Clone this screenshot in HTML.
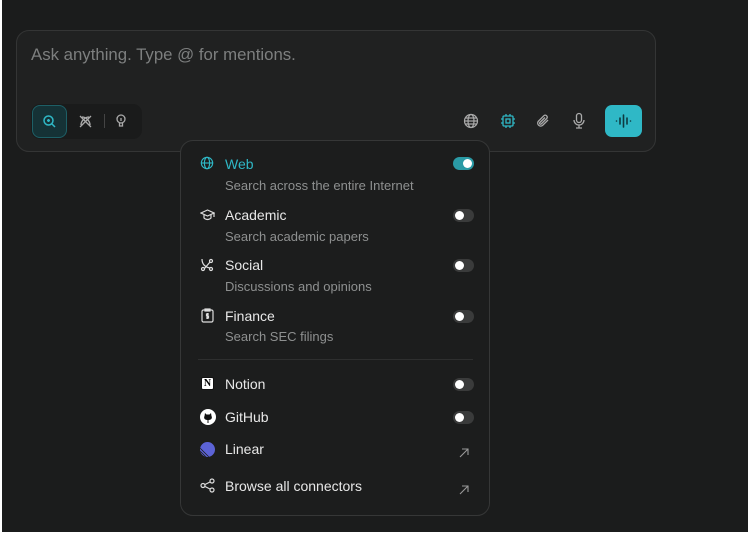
<!DOCTYPE html>
<html><head><meta charset="utf-8"><style>
*{box-sizing:border-box;margin:0;padding:0}
html,body{width:751px;height:534px;background:#fff;overflow:hidden;font-family:"Liberation Sans",sans-serif}
.bg{position:absolute;left:2px;top:0;width:746px;height:532px;background:#1b1c1c}
.box{position:absolute;left:16px;top:30px;width:640px;height:122px;background:#202121;border:1px solid #343535;border-radius:13px}
.ph{position:absolute;left:14px;top:14px;font-size:16.8px;color:#7d7f7f}
.seg{position:absolute;left:14px;top:73px;width:111px;height:35px;background:#1a1b1b;border-radius:9px}
.seg .act{position:absolute;left:1px;top:1px;width:35px;height:33px;background:#153236;border:1px solid #1d5f66;border-radius:8px}
.seg .div{position:absolute;left:73px;top:10px;width:1px;height:14px;background:#444}
svg{position:absolute}
.send{position:absolute;left:588px;top:74px;width:37px;height:32px;background:#2fb8c6;border-radius:7px}
.pop{position:absolute;left:180px;top:140px;width:310px;height:376px;background:#1c1d1d;border:1px solid #363737;border-radius:13px}
.t{position:absolute;left:44px;font-size:14px;color:#e8e8e8}
.s{position:absolute;left:44px;font-size:13px;color:#8e9090}
.tg{position:absolute;left:272px;width:21px;height:13px;border-radius:7px;background:#3a3b3b}
.tg::after{content:"";position:absolute;left:2px;top:2px;width:9px;height:9px;border-radius:50%;background:#fff}
.tg.on{background:#2a9aa5}.tg.on::after{left:10px}
.hr{position:absolute;left:17px;top:218px;width:275px;height:1px;background:#2e2f2f}
</style></head><body>
<div class="bg"></div>
<div class="box">
<div class="ph">Ask anything. Type @ for mentions.</div>
<div class="seg"><div class="act"></div><div class="div"></div>
<svg style="left:11px;top:10px" width="15" height="15" viewBox="0 0 15 15" fill="none" stroke="#2fb8c6" stroke-width="1.5"><circle cx="6.5" cy="6.5" r="4.5"/><path d="M10 10l3 3M6.5 5v3M5 6.5h3"/></svg>
<svg style="left:47px;top:10px" width="15" height="15" viewBox="0 0 15 15" fill="none" stroke="#aaa" stroke-width="1.3"><path d="M2 2l11 11M13 2L2 13M4 3c4 0 8 4 8 8M3 11c0-4 4-8 8-8"/></svg>
<svg style="left:83px;top:9px" width="14" height="16" viewBox="0 0 14 16" fill="none" stroke="#aaa" stroke-width="1.3"><circle cx="7" cy="6" r="4"/><path d="M5.5 10v3h3v-3M7 5v3"/></svg>
</div>
<svg style="left:446px;top:82px" width="16" height="16" viewBox="0 0 16 16" fill="none" stroke="#aaa" stroke-width="1.2"><circle cx="8" cy="8" r="6.5"/><ellipse cx="8" cy="8" rx="3" ry="6.5"/><path d="M1.5 8h13M2.5 5h11M2.5 11h11"/></svg>
<svg style="left:483px;top:82px" width="16" height="16" viewBox="0 0 16 16" fill="none" stroke="#2fb8c6" stroke-width="1.3"><rect x="3" y="3" width="10" height="10" rx="1"/><rect x="6" y="6" width="4" height="4"/><path d="M6 1v2M10 1v2M6 13v2M10 13v2M1 6h2M1 10h2M13 6h2M13 10h2"/></svg>
<svg style="left:518px;top:82px" width="16" height="16" viewBox="0 0 16 16" fill="none" stroke="#aaa" stroke-width="1.3"><path d="M13 7l-5.5 5.5a3 3 0 01-4.2-4.2L9 2.6a2 2 0 012.8 2.8L6.2 11a1 1 0 01-1.4-1.4L10 4.5"/></svg>
<svg style="left:554px;top:81px" width="16" height="17" viewBox="0 0 16 17" fill="none" stroke="#aaa" stroke-width="1.3"><rect x="5.5" y="1.5" width="5" height="9" rx="2.5"/><path d="M3 8a5 5 0 0010 0M8 13v3M5 16h6"/></svg>
<div class="send"><svg style="left:10px;top:8px" width="17" height="16" viewBox="0 0 17 16" stroke="#0e3a40" stroke-width="1.6" stroke-linecap="round"><path d="M1.5 8v0M5 5v6M8.5 2v12M12 5v6M15.5 8v0"/></svg></div>
</div>
<div class="pop">
<svg style="left:19px;top:15px" width="14" height="14" viewBox="0 0 16 16" fill="none" stroke="#2fb8c6" stroke-width="1.3"><circle cx="8" cy="8" r="6.5"/><ellipse cx="8" cy="8" rx="3" ry="6.5"/><path d="M1.5 8h13"/></svg>
<div class="t" style="top:15px;color:#2fb8c6">Web</div><div class="s" style="top:37px">Search across the entire Internet</div><div class="tg on" style="top:16px"></div>
<svg style="left:19px;top:67px" width="15" height="14" viewBox="0 0 15 14" fill="none" stroke="#ddd" stroke-width="1.2"><path d="M1 5l6.5-3 6.5 3-6.5 3zM4 6.5v3.5c2 2 5 2 7 0V6.5M14 5v4"/></svg>
<div class="t" style="top:66px">Academic</div><div class="s" style="top:88px">Search academic papers</div><div class="tg" style="top:68px"></div>
<svg style="left:19px;top:117px" width="14" height="14" viewBox="0 0 14 14" fill="none" stroke="#ddd" stroke-width="1.2"><circle cx="3" cy="11" r="1.5"/><circle cx="11" cy="11" r="1.5"/><circle cx="11" cy="3" r="1.5"/><path d="M2 1c0 5 3 8 8 9M4.5 10.5L10 4"/></svg>
<div class="t" style="top:116px">Social</div><div class="s" style="top:138px">Discussions and opinions</div><div class="tg" style="top:118px"></div>
<svg style="left:20px;top:167px" width="13" height="15" viewBox="0 0 13 15" fill="none" stroke="#ddd" stroke-width="1.2"><rect x="1" y="2" width="11" height="12" rx="1.5"/><rect x="4" y="1" width="5" height="2"/><path d="M8 6H5.5v2h2v2H5M6.5 5v6"/></svg>
<div class="t" style="top:167px">Finance</div><div class="s" style="top:188px">Search SEC filings</div><div class="tg" style="top:169px"></div>
<div class="hr"></div>
<div style="position:absolute;left:20px;top:236px;width:13px;height:13px;background:#fff;border:1.5px solid #111;border-radius:2px;font:bold 10px 'Liberation Serif',serif;color:#000;text-align:center;line-height:11px">N</div>
<div class="t" style="top:235px">Notion</div><div class="tg" style="top:237px"></div>
<div style="position:absolute;left:19px;top:268px;width:16px;height:16px;border-radius:50%;background:#fff"><svg style="left:3px;top:3px" width="10" height="11" viewBox="0 0 10 11"><path d="M2 1l1.5 1.5h3L8 1l.5 3c1 2 0 4-3 4v3H4.5V8C1.5 8 .5 6 1.5 4z" fill="#111"/></svg></div>
<div class="t" style="top:268px">GitHub</div><div class="tg" style="top:270px"></div>
<div style="position:absolute;left:19px;top:301px;width:15px;height:15px;border-radius:50%;background:#5c63d6;overflow:hidden"><svg style="left:0;top:0" width="15" height="15" viewBox="0 0 15 15" stroke="#1c1d1d" stroke-width=".8"><path d="M0 6l9 9M0 9l6 6M0 12l3 3"/></svg></div>
<div class="t" style="top:300px">Linear</div>
<svg style="left:278px;top:307px" width="10" height="10" viewBox="0 0 10 10" fill="none" stroke="#999" stroke-width="1.1"><path d="M1 9l8-8M3 1h6v6"/></svg>
<svg style="left:19px;top:337px" width="15" height="15" viewBox="0 0 15 15" fill="none" stroke="#ddd" stroke-width="1.2"><circle cx="3" cy="7.5" r="2"/><circle cx="12" cy="3" r="2"/><circle cx="12" cy="12" r="2"/><path d="M5 6.5l5-2.5M5 8.5l5 2.5"/></svg>
<div class="t" style="top:337px">Browse all connectors</div>
<svg style="left:278px;top:344px" width="10" height="10" viewBox="0 0 10 10" fill="none" stroke="#999" stroke-width="1.1"><path d="M1 9l8-8M3 1h6v6"/></svg>
</div>
</body></html>
